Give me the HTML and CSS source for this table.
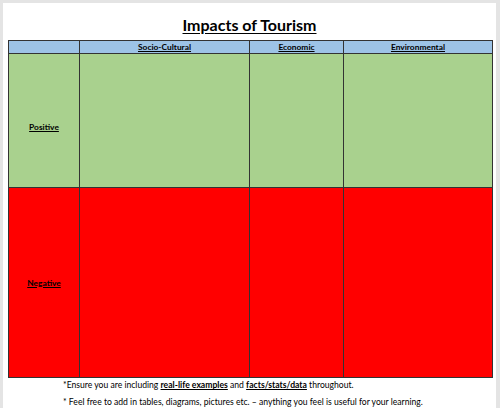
FILE: index.html
```html
<!DOCTYPE html>
<html>
<head>
<meta charset="utf-8">
<link rel="stylesheet" href="styles.css">
</head>
<body>
<div class="page">
  <h1 class="title">Impacts of Tourism</h1>
  <table class="grid">
    <colgroup>
      <col class="c0"><col class="c1"><col class="c2"><col class="c3">
    </colgroup>
    <tr class="head">
      <td></td><td>Socio-Cultural</td><td>Economic</td><td>Environmental</td>
    </tr>
    <tr class="pos">
      <td class="label">Positive</td><td></td><td></td><td></td>
    </tr>
    <tr class="neg">
      <td class="label">Negative</td><td></td><td></td><td></td>
    </tr>
  </table>
  <div class="notes">
    <p class="note">*Ensure you are including <b>real-life examples</b> and <b>facts/stats/data</b> throughout.</p>
    <p class="note">* Feel free to add in tables, diagrams, pictures etc. – anything you feel is useful for your learning.</p>
  </div>
</div>
</body>
</html>
```
FILE: styles.css
```css
html, body {
  margin: 0;
  padding: 0;
  background: #e4e4e4;
  height: 100%;
}
body {
  font-family: Lato, "Open Sans", "Liberation Sans", sans-serif;
  color: #000;
  overflow: hidden;
}
.page {
  margin: 3px 4px 0 3px;
  background: #fff;
  height: 405px;
  padding: 6px 0 0 5px;
  box-sizing: border-box;
}
.title {
  margin: 0 0 0 -5px;
  text-align: center;
  font-size: 16px;
  font-weight: 700;
  text-decoration: underline;
  text-underline-offset: 2px;
  line-height: 31px;
  height: 31px;
}
.grid {
  border-collapse: collapse;
  table-layout: fixed;
  width: 484px;
  border: 1.5px solid #6e6e6e;
}
.c0 { width: 71px; }
.c1 { width: 170px; }
.c2 { width: 94px; }
.c3 { width: 149px; }
.grid td {
  border: 1px solid #333;
  padding: 0;
  text-align: center;
  font-size: 8.4px;
  font-weight: 700;
}
.head td {
  background: #9dc3e6;
  height: 12px;
  line-height: 12px;
  text-decoration: underline;
}
.pos td {
  background: #a9d18e;
  height: 133px;
}
.pos .label {
  padding-top: 12px;
  height: 121px;
}
.neg td {
  background: #ff0000;
  height: 189px;
}
.label {
  text-decoration: underline;
  font-size: 8.8px;
}
.notes {
  display: flex;
  flex-direction: column;
  gap: 3px;
  padding-top: 0;
}
.note {
  margin: 0 0 0 55px;
  font-size: 8.6px;
  line-height: 14px;
}
.note b {
  text-decoration: underline;
}
```
